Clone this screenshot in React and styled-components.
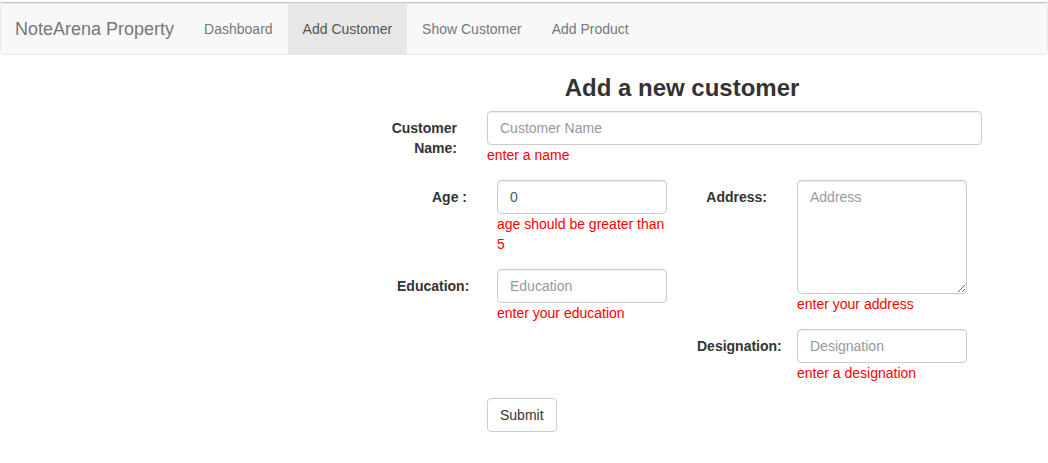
import React from 'react';
import styled, { createGlobalStyle } from 'styled-components';

const GlobalStyle = createGlobalStyle`
  * {
    box-sizing: border-box;
  }
  body {
    margin: 0;
    background: #fff;
    font-family: "Liberation Sans", Arial, Helvetica, sans-serif;
    font-size: 14px;
    line-height: 1.42857;
    color: #333;
  }
`;

const links = [
  { label: 'Dashboard' },
  { label: 'Add Customer', active: true },
  { label: 'Show Customer' },
  { label: 'Add Product' },
];

const App = () => {
  return (
    <>
      <GlobalStyle />
      <TopRule />
      <Navbar>
        <Brand href="#">NoteArena Property</Brand>
        <NavList>
          {links.map((l) => (
            <NavItem key={l.label}>
              <NavLink href="#" $active={l.active}>
                {l.label}
              </NavLink>
            </NavItem>
          ))}
        </NavList>
      </Navbar>

      <Page>
        <FormArea>
          <Heading>Add a new customer</Heading>

          <FormGroup $labelWidth={105}>
            <Label>Customer Name:</Label>
            <Field>
              <Input type="text" placeholder="Customer Name" />
              <Error>enter a name</Error>
            </Field>
          </FormGroup>

          <Halves>
            <div>
              <FormGroup $labelWidth={100}>
                <Label>Age :</Label>
                <Field>
                  <Input type="number" defaultValue="0" />
                  <Error>age should be greater than 5</Error>
                </Field>
              </FormGroup>
              <FormGroup $labelWidth={100}>
                <Label>Education:</Label>
                <Field>
                  <Input type="text" placeholder="Education" />
                  <Error>enter your education</Error>
                </Field>
              </FormGroup>
            </div>
            <div>
              <FormGroup $labelWidth={100}>
                <Label>Address:</Label>
                <Field>
                  <TextArea rows={5} placeholder="Address" />
                  <Error>enter your address</Error>
                </Field>
              </FormGroup>
              <FormGroup $labelWidth={100}>
                <Label>Designation:</Label>
                <Field>
                  <Input type="text" placeholder="Designation" />
                  <Error>enter a designation</Error>
                </Field>
              </FormGroup>
            </div>
          </Halves>

          <FormGroup $labelWidth={105}>
            <span />
            <Field>
              <SubmitButton type="submit">Submit</SubmitButton>
            </Field>
          </FormGroup>
        </FormArea>
      </Page>
    </>
  );
};

const TopRule = styled.div`
  height: 3px;
  border-bottom: 1px solid #c6c6c6;
`;

const Navbar = styled.nav`
  display: flex;
  align-items: stretch;
  height: 52px;
  background: #f8f8f8;
  border: 1px solid #e7e7e7;
  border-radius: 4px;
`;

const Brand = styled.a`
  display: block;
  padding: 15px 15px 15px 14px;
  font-size: 18px;
  line-height: 20px;
  color: #777;
  text-decoration: none;
`;

const NavList = styled.ul`
  display: flex;
  margin: 0;
  padding: 0;
  list-style: none;
`;

const NavItem = styled.li`
  display: flex;
`;

const NavLink = styled.a`
  display: block;
  padding: 15px;
  line-height: 20px;
  color: ${(p) => (p.$active ? '#555' : '#777')};
  background: ${(p) => (p.$active ? '#e7e7e7' : 'transparent')};
  text-decoration: none;
`;

const Page = styled.main`
  display: grid;
  grid-template-columns: 367px 630px;
`;

const FormArea = styled.form`
  grid-column: 2;
`;

const Heading = styled.h2`
  margin: 20px 0 10px;
  font-size: 24px;
  font-weight: 700;
  line-height: 1.1;
  text-align: center;
  color: #333;
`;

const FormGroup = styled.div`
  display: grid;
  grid-template-columns: ${(p) => p.$labelWidth}px 1fr;
  margin-bottom: 15px;
`;

const Label = styled.label`
  padding: 8px 15px 0;
  font-weight: 700;
  text-align: right;
`;

const Field = styled.div`
  padding: 0 15px;
`;

const Halves = styled.div`
  display: grid;
  grid-template-columns: 1fr 1fr;
  padding: 0 15px;
`;

const Input = styled.input`
  display: block;
  width: 100%;
  height: 34px;
  padding: 6px 12px;
  font-family: inherit;
  font-size: 14px;
  line-height: 1.42857;
  color: #555;
  background: #fff;
  border: 1px solid #ccc;
  border-radius: 4px;
  box-shadow: inset 0 1px 1px rgba(0, 0, 0, 0.075);
  appearance: textfield;

  &::placeholder {
    color: #999;
  }
  &::-webkit-inner-spin-button,
  &::-webkit-outer-spin-button {
    -webkit-appearance: none;
    margin: 0;
  }
`;

const TextArea = styled.textarea`
  display: block;
  width: 100%;
  height: 114px;
  padding: 7px 12px 5px;
  font-family: inherit;
  font-size: 14px;
  line-height: 1.42857;
  color: #555;
  background: #fff;
  border: 1px solid #ccc;
  border-radius: 4px;
  box-shadow: inset 0 1px 1px rgba(0, 0, 0, 0.075);
  resize: vertical;

  &::placeholder {
    color: #999;
  }
`;

const Error = styled.span`
  display: block;
  color: #f00;
  line-height: 20px;
`;

const SubmitButton = styled.button`
  padding: 7px 12px 5px;
  font-family: inherit;
  font-size: 14px;
  line-height: 1.42857;
  color: #333;
  background: #fff;
  border: 1px solid #ccc;
  border-radius: 4px;
  cursor: pointer;

  &:hover {
    background: #e6e6e6;
  }
`;

export default App;
